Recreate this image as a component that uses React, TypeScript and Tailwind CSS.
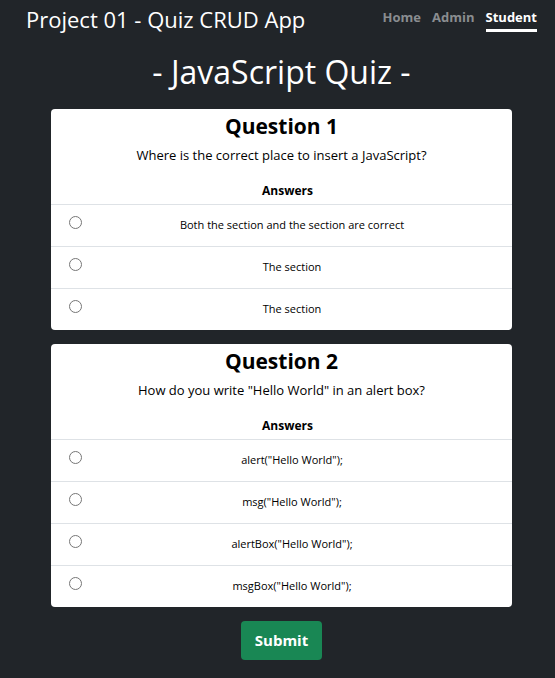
import React from 'react';

const questions = [
  {
    title: 'Question 1',
    text: 'Where is the correct place to insert a JavaScript?',
    answers: ['Both the section and the section are correct', 'The section', 'The section'],
  },
  {
    title: 'Question 2',
    text: 'How do you write "Hello World" in an alert box?',
    answers: ['alert("Hello World");', 'msg("Hello World");', 'alertBox("Hello World");', 'msgBox("Hello World");'],
  },
];

const QuestionCard = ({ title, text, answers }: { title: string; text: string; answers: string[] }) => (
  <div className="bg-white rounded-[4px] overflow-hidden text-black">
    <h2 className="text-[21px] font-bold text-center leading-[28px] pt-[3px]">{title}</h2>
    <p className="text-[13px] text-center mt-[5px] leading-[20px]">{text}</p>
    <h3 className="text-[12px] font-bold text-center mt-[16px] leading-[20px] pb-[3px] pl-[12px]">Answers</h3>
    {answers.map((a, i) => (
      <label key={i} className="flex items-start h-[42px] border-t border-[#dee2e6] pl-[18px] pr-[10px] pt-[10px] cursor-pointer">
        <input type="radio" name={title} className="w-[13px] h-[13px] mt-[1px] accent-gray-400" />
        <span className="flex-1 text-center text-[11px] font-medium leading-[20px]">{a}</span>
      </label>
    ))}
  </div>
);

const App = () => {
  return (
    <div className="min-h-[678px] bg-[#212529] text-white" style={{ fontFamily: '"Open Sans", "Noto Sans", sans-serif' }}>
      <nav className="flex items-start justify-between pl-[26px] pr-[18px] pt-[4px]">
        <span className="text-[22px] leading-[30px]">Project 01 - Quiz CRUD App</span>
        <div className="flex gap-[11px] text-[13px] font-bold pt-[4px]">
          <a className="text-[#8a8d90]">Home</a>
          <a className="text-[#8a8d90]">Admin</a>
          <a className="text-white border-b-[3px] border-white pb-[1px]">Student</a>
        </div>
      </nav>
      <h1 className="text-center text-[32px] leading-[40px] mt-[18px] pl-[8px]">- JavaScript Quiz -</h1>
      <main className="w-[461px] mx-auto translate-x-[4px] mt-[17px] flex flex-col gap-[14px]">
        {questions.map((q) => (
          <QuestionCard key={q.title} {...q} />
        ))}
        <div className="flex justify-center">
          <button className="bg-[#198754] text-white font-bold text-[15px] rounded-[4px] w-[81px] h-[39px]">Submit</button>
        </div>
      </main>
    </div>
  );
};

export default App;
